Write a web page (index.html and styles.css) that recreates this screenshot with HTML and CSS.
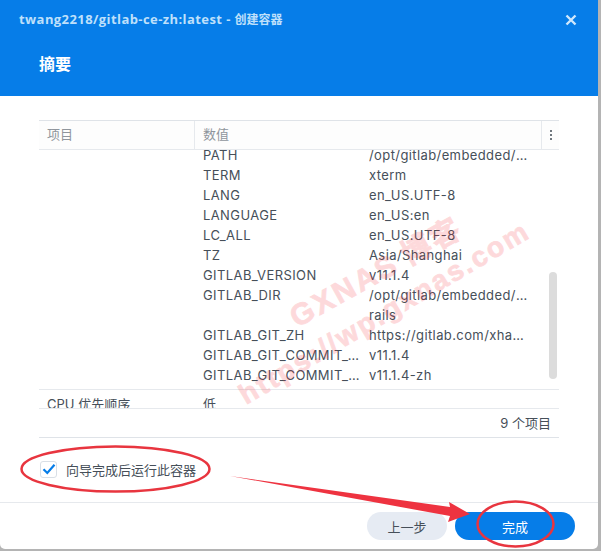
FILE: index.html
```html
<!DOCTYPE html>
<html lang="zh">
<head>
<meta charset="utf-8">
<title>创建容器</title>
<link rel="stylesheet" href="styles.css">
</head>
<body>
<div class="dialog">
  <header class="head">
    <div class="title-row">
      <span class="title">twang2218/gitlab-ce-zh:latest - <span class="title-zh">创建容器</span></span>
      <svg class="close" width="12" height="12" viewBox="0 0 12 12"><path d="M1.5 1.5l9 9M10.5 1.5l-9 9"/></svg>
    </div>
    <h1 class="step">摘要</h1>
  </header>
  <main class="content">
    <div class="table">
      <div class="thead">
        <div class="th th-key">项目</div>
        <div class="th th-val">数值</div>
        <div class="th th-menu"><span class="dot"></span><span class="dot"></span><span class="dot"></span></div>
      </div>
      <div class="tbody">
        <div class="scroll-inner">
          <div class="row env">
            <div class="cell-key"></div>
            <div class="cell-val env-grid">
              <div class="k">PATH</div><div class="v">/opt/gitlab/embedded/bin:/usr/local</div>
              <div class="k">TERM</div><div class="v">xterm</div>
              <div class="k">LANG</div><div class="v">en_US.UTF-8</div>
              <div class="k">LANGUAGE</div><div class="v">en_US:en</div>
              <div class="k">LC_ALL</div><div class="v">en_US.UTF-8</div>
              <div class="k">TZ</div><div class="v">Asia/Shanghai</div>
              <div class="k">GITLAB_VERSION</div><div class="v">v11.1.4</div>
              <div class="k">GITLAB_DIR</div><div class="v">/opt/gitlab/embedded/service/gitlab-<br><span>rails</span></div>
              <div class="k">GITLAB_GIT_ZH</div><div class="v">https://gitlab.com/xhang/gitlab.git</div>
              <div class="k">GITLAB_GIT_COMMIT_UPSTREAM</div><div class="v">v11.1.4</div>
              <div class="k">GITLAB_GIT_COMMIT_ZH_UPSTREAM</div><div class="v">v11.1.4-zh</div>
            </div>
          </div>
          <div class="row cpu">
            <div class="cell-key">CPU 优先顺序</div>
            <div class="cell-val">低</div>
          </div>
        </div>
        <div class="scrollbar"></div>
      </div>
      <div class="tfoot">9 个项目</div>
    </div>
    <label class="check-row">
      <span class="checkbox"><svg width="14" height="12" viewBox="0 0 14 12"><path d="M1.5 6.2l3.8 3.8 7.2-8.2"/></svg></span>
      <span>向导完成后运行此容器</span>
    </label>
  </main>
  <footer class="foot">
    <button class="btn btn-prev">上一步</button>
    <button class="btn btn-done">完成</button>
  </footer>
</div>
<svg class="overlay" width="601" height="551" viewBox="0 0 601 551">
  <text class="wm wm-a" transform="translate(297 328) rotate(-29)">GXNAS<tspan dx="8">博客</tspan></text>
  <text class="wm wm-b" transform="translate(246 405) rotate(-30.5)">https://wp.gxnas.com</text>
  <ellipse class="ring" cx="115.5" cy="469" rx="94" ry="22.5"/>
  <ellipse class="ring" cx="515.5" cy="524" rx="38" ry="22.5"/>
  <polygon class="arrow" points="230,476 450,507 449,502 470,514 448,522 450,516"/>
</svg>
</body>
</html>
```
FILE: styles.css
```css
* { box-sizing: border-box; }
html, body { margin: 0; padding: 0; }
body {
  width: 601px;
  height: 551px;
  background: #b4b4b4;
  overflow: hidden;
  position: relative;
  font-family: "Inter", "Noto Sans CJK SC", sans-serif;
  font-size: 13px;
  color: #464f59;
}
.dialog {
  width: 598px;
  height: 549px;
  background: #fff;
  border-radius: 0 0 5px 5px;
  display: flex;
  flex-direction: column;
  overflow: hidden;
}
.head {
  height: 96px;
  flex: none;
  background: #067de8;
  color: #fff;
  display: flex;
  flex-direction: column;
}
.title-row {
  display: flex;
  justify-content: space-between;
  align-items: center;
  height: 38px;
  padding: 0 21px 1px 19px;
}
.title {
  font-family: "Open Sans", "Noto Sans CJK SC", sans-serif;
  font-weight: 700;
  font-size: 13px;
  letter-spacing: 0.42px;
  color: #bfe0fb;
}
.title-zh { font-size: 12px; letter-spacing: 0; }
.close { margin-top: 2px; }
.close path { stroke: #cfe8fc; stroke-width: 2.4; fill: none; }
.step {
  margin: 15px 0 0 39px;
  font-size: 16px;
  line-height: 22px;
  font-weight: 700;
}
.content {
  flex: 1;
  padding: 24px 39px 0;
  display: flex;
  flex-direction: column;
}
.table { width: 520px; display: flex; flex-direction: column; }
.thead {
  height: 30px;
  flex: none;
  display: flex;
  border-top: 1px solid #dfe3e8;
  border-bottom: 1px solid #e6e9ed;
  color: #8f959c;
  line-height: 27px;
  background: #fdfdfd;
}
.th { padding-left: 8px; }
.th-key { width: 156px; border-right: 1px solid #e6e9ed; }
.th-val { flex: 1; border-right: 1px solid #e6e9ed; }
.th-menu {
  width: 17px;
  padding: 0;
  display: flex;
  flex-direction: column;
  align-items: center;
  justify-content: center;
  gap: 2px;
}
.dot { width: 2px; height: 2px; background: #70777e; }
.tbody {
  height: 258px;
  flex: none;
  position: relative;
  overflow: hidden;
}
.scroll-inner { margin-top: -5px; }
.row { display: flex; line-height: 20px; }
.env { padding-bottom: 4px; border-bottom: 1px solid #e6e9ed; }
.cpu { padding-top: 4px; }
.cell-key { width: 156px; padding-left: 8px; flex: none; }
.cell-val { flex: 1; padding-left: 8px; }
.env-grid {
  display: grid;
  grid-template-columns: 166px 160px;
}
.k, .v {
  letter-spacing: 0.4px;
  overflow: hidden;
  text-overflow: ellipsis;
  white-space: nowrap;
}
.k { padding-right: 3px; }
.scrollbar {
  position: absolute;
  left: 510px;
  top: 122px;
  width: 8px;
  height: 107px;
  border-radius: 4px;
  background: #dcdcdc;
}
.tfoot {
  height: 30px;
  flex: none;
  border-top: 1px solid #e6e9ed;
  border-bottom: 1px solid #dfe3e8;
  text-align: right;
  padding-right: 8px;
  line-height: 28px;
}
.check-row {
  margin: 22px 0 0 1px;
  height: 18px;
  display: flex;
  align-items: center;
  gap: 9px;
}
.checkbox {
  width: 17px;
  height: 17px;
  border: 1px solid #d9dfe6;
  border-radius: 3px;
  display: flex;
  align-items: center;
  justify-content: center;
  background: #fff;
}
.checkbox path { fill: none; stroke: #067de8; stroke-width: 2.2; }
.foot {
  height: 47px;
  flex: none;
  border-top: 1px solid #e6e9ed;
  display: flex;
  justify-content: flex-end;
  gap: 8px;
  padding: 9px 23px 0 0;
}
.btn {
  height: 28px;
  border: 0;
  border-radius: 14px;
  font: inherit;
  padding: 0;
}
.btn-prev { width: 80px; background: #e6ebf3; color: #464f59; }
.btn-done { width: 120px; background: #067de8; color: #fff; }
.overlay { position: absolute; left: 0; top: 0; pointer-events: none; }
.wm {
  font-family: "Liberation Sans", "Noto Sans CJK SC", sans-serif;
  font-weight: 700;
  fill: #f5323c;
  stroke: #f5323c;
  stroke-width: 0.8;
  opacity: 0.18;
}
.wm-a { font-size: 30px; letter-spacing: 2.5px; }
.wm-b { font-size: 28px; letter-spacing: 2.3px; }
.ring { fill: none; stroke: #e8353f; stroke-width: 2.5; }
.arrow { fill: #ee3340; }
```
